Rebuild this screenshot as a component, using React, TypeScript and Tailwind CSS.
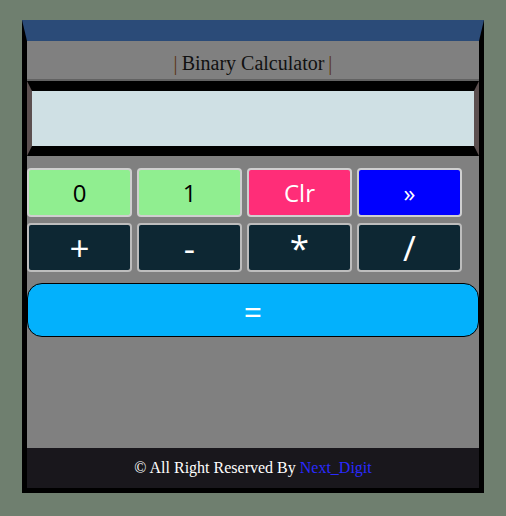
import React from 'react';

const topKeys = [
  { label: "0", cls: "bg-[#90ee90] text-black" },
  { label: "1", cls: "bg-[#90ee90] text-black" },
  { label: "Clr", cls: "bg-[#ff2d78] text-white" },
  { label: "»", cls: "bg-[#0000ff] text-white" },
];

const opKeys = ["+", "-", "*", "/"];

export default function App() {
  return (
    <div className="min-h-[516px] w-full bg-[#6f7f6f] pt-[20px] pl-[22px]">
      <div className="w-[462px] border-t-[21px] border-x-[5px] border-b-[5px] border-t-[#2b4b78] border-x-black border-b-black bg-[#808080]">
        <div className="h-[40px] pt-[6px] flex items-center justify-center border-b-2 border-[#626262] font-['Liberation_Serif',serif] text-[20px] text-[#111]">
          <span className="text-[#5a3412]">|</span>
          <span className="px-[4px]">Binary Calculator</span>
          <span className="text-[#5a3412]">|</span>
        </div>

        <div className="h-[75px] border-y-[10px] border-x-[5px] border-y-black border-x-[#5c5050] bg-[#cfe0e4]"></div>

        <div className="mt-[12px] grid grid-cols-[repeat(4,105px)] gap-x-[5px] gap-y-[6px] font-['Open_Sans',sans-serif]">
          {topKeys.map((k) => (
            <button key={k.label} className={`h-[49px] rounded-[4px] border-2 border-[#cfcfcf] text-[24px] leading-none ${k.cls}`}>
              {k.label}
            </button>
          ))}
          {opKeys.map((k) => (
            <button key={k} className="h-[49px] rounded-[4px] border-2 border-[#bdbdbd] bg-[#0d2733] text-white text-[35px] leading-none">
              {k}
            </button>
          ))}
        </div>

        <button className="mt-[11px] h-[54px] w-full rounded-[15px] border border-black bg-[#03b1fc] pt-[4px] text-white text-[32px] leading-none font-['Open_Sans',sans-serif]">
          =
        </button>

        <div className="h-[111px]"></div>

        <div className="h-[40px] flex items-center justify-center bg-[#19171c] font-['Liberation_Serif',serif] text-[16px] text-white">
          © All Right Reserved By&nbsp;<span className="text-[#2a2aff]">Next_Digit</span>
        </div>
      </div>
    </div>
  );
}
